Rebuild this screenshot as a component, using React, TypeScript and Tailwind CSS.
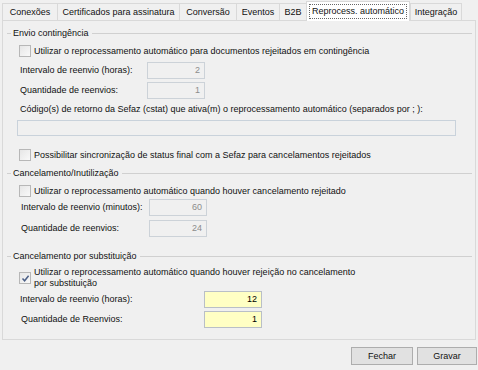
import React from "react";

const tabs = [
  { label: "Conexões", w: 55 },
  { label: "Certificados para assinatura", w: 122 },
  { label: "Conversão", w: 57 },
  { label: "Eventos", w: 43 },
  { label: "B2B", w: 27 },
  { label: "Reprocess. automático", w: 104, selected: true },
  { label: "Integração", w: 52 },
];

function Legend({ text }: { text: string }) {
  return (
    <div className="flex items-center h-[11px] ml-[4px] mr-[3px]">
      <div className="w-[4px] h-px bg-[#d0d0d0]" />
      <span className="ml-[2px] mr-[3px] whitespace-nowrap leading-[11px]">{text}</span>
      <div className="flex-1 h-px bg-[#d0d0d0]" />
    </div>
  );
}

function Box({ checked }: { checked?: boolean }) {
  return (
    <div className="w-[12px] h-[12px] shrink-0 border border-[#b7b7b7] bg-gradient-to-br from-[#e6e6e6] to-[#f9f9f9] flex items-center justify-center">
      {checked && (
        <svg width="9" height="9" viewBox="0 0 9 9">
          <path d="M1.5 4.5 L3.6 6.8 L7.6 1.8" fill="none" stroke="#4b5f86" strokeWidth="1.5" />
        </svg>
      )}
    </div>
  );
}

function Check({ text, checked }: { text: React.ReactNode; checked?: boolean }) {
  return (
    <div className="flex items-center ml-[16px]">
      <Box checked={checked} />
      <span className="ml-[3px] leading-[11px]">{text}</span>
    </div>
  );
}

function Field({
  label,
  value,
  ml,
  lw,
  yellow,
  mt,
}: {
  label: string;
  value: string;
  ml: string;
  lw: string;
  yellow?: boolean;
  mt: string;
}) {
  return (
    <div className={`flex items-center h-[17px] ${mt}`}>
      <div className={`${ml} ${lw} leading-[11px] whitespace-nowrap`}>{label}</div>
      <div
        className={
          yellow
            ? "w-[58px] h-[17px] border border-[#b9bfc7] bg-[#ffffc4] text-black text-right pr-[4px] leading-[15px]"
            : "w-[58px] h-[17px] border border-[#ccd2d8] bg-[#f0f0f0] text-[#8c8c8c] text-right pr-[4px] leading-[15px]"
        }
      >
        {value}
      </div>
    </div>
  );
}

export default function App() {
  return (
    <div className="w-[478px] h-[370px] bg-[#f0f0f0] text-[9px] text-[#111] overflow-hidden font-['Liberation_Sans',Arial,sans-serif]">
      <div className="flex h-[21px] pl-[2px] items-end relative z-10">
        {tabs.map((t, i) =>
          t.selected ? (
            <div
              key={t.label}
              style={{ width: t.w }}
              className="h-[20px] shrink-0 border border-b-0 border-[#d9d9d9] bg-white flex items-start justify-center pt-[2px]"
            >
              <span className="border border-dotted border-[#666] px-[2px] leading-[13px] whitespace-nowrap">
                {t.label}
              </span>
            </div>
          ) : (
            <div
              key={t.label}
              style={{ width: t.w }}
              className={`h-[18px] shrink-0 border-t border-l border-[#d9d9d9] ${
                i === tabs.length - 1 ? "border-r" : ""
              } flex items-center justify-center leading-[11px] whitespace-nowrap`}
            >
              {t.label}
            </div>
          )
        )}
      </div>
      <div className="ml-[2px] w-[474px] h-[320px] -mt-px border border-[#d9d9d9] bg-[#f0f0f0] flex flex-col">
        <div className="mt-[7px]">
          <Legend text="Envio contingência" />
        </div>
        <div className="mt-[6px]">
          <Check text="Utilizar o reprocessamento automático para documentos rejeitados em contingência" />
        </div>
        <Field mt="mt-[5px]" ml="ml-[17px]" lw="w-[127px]" label="Intervalo de reenvio (horas):" value="2" />
        <Field mt="mt-[3px]" ml="ml-[17px]" lw="w-[127px]" label="Quantidade de reenvios:" value="1" />
        <div className="mt-[5px] ml-[17px] leading-[11px]">
          Código(s) de retorno da Sefaz (cstat) que ativa(m) o reprocessamento automático (separados por ; ):
        </div>
        <div className="mt-[5px] ml-[14px] w-[439px] h-[16px] border border-[#c9d2db] bg-[#f0f0f0]" />
        <div className="mt-[13px]">
          <Check text="Possibilitar sincronização de status final com a Sefaz para cancelamentos rejeitados" />
        </div>
        <div className="mt-[7px]">
          <Legend text="Cancelamento/Inutilização" />
        </div>
        <div className="mt-[6px]">
          <Check text="Utilizar o reprocessamento automático quando houver cancelamento rejeitado" />
        </div>
        <Field mt="mt-[2px]" ml="ml-[18px]" lw="w-[128px]" label="Intervalo de reenvio (minutos):" value="60" />
        <Field mt="mt-[4px]" ml="ml-[18px]" lw="w-[128px]" label="Quantidade de reenvios:" value="24" />
        <div className="mt-[14px]">
          <Legend text="Cancelamento por substituição" />
        </div>
        <div className="mt-[5px]">
          <Check
            checked
            text={
              <>
                Utilizar o reprocessamento automático quando houver rejeição no cancelamento
                <br />
                por substituição
              </>
            }
          />
        </div>
        <Field mt="mt-[2px]" ml="ml-[17px]" lw="w-[184px]" label="Intervalo de reenvio (horas):" value="12" yellow />
        <Field mt="mt-[3px]" ml="ml-[18px]" lw="w-[183px]" label="Quantidade de Reenvios:" value="1" yellow />
      </div>
      <div className="flex justify-end gap-[4px] pr-[1px] mt-[7px]">
        <div className="w-[62px] h-[18px] border border-[#adadad] bg-[#e1e1e1] flex items-center justify-center leading-[11px]">
          Fechar
        </div>
        <div className="w-[60px] h-[18px] border border-[#adadad] bg-[#e1e1e1] flex items-center justify-center leading-[11px]">
          Gravar
        </div>
      </div>
    </div>
  );
}
